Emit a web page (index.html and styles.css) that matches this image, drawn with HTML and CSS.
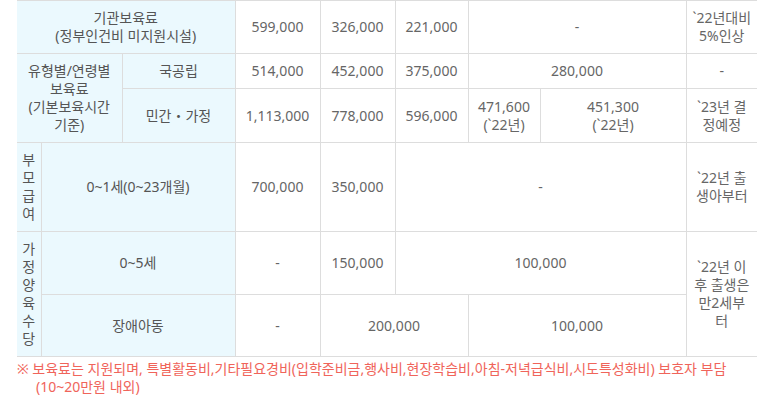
FILE: index.html
```html
<!DOCTYPE html>
<html lang="ko">

<head>
    <meta charset="UTF-8">
    <meta name="viewport" content="width=device-width, initial-scale=1.0">
    <title>보육료 지원단가</title>
    <link rel="stylesheet" href="styles.css">
</head>

<body>
    <div class="wrap">
        <table class="tbl">
            <colgroup>
                <col class="c1">
                <col class="c2">
                <col class="c3">
                <col class="c4">
                <col class="c5">
                <col class="c6">
                <col class="c7">
                <col class="c8">
                <col class="c9">
            </colgroup>
            <tbody>
                <tr class="r1">
                    <th colspan="3">기관보육료<br>(정부인건비 미지원시설)</th>
                    <td>599,000</td>
                    <td>326,000</td>
                    <td>221,000</td>
                    <td colspan="2">-</td>
                    <td class="note">`22년대비<br>5%인상</td>
                </tr>
                <tr class="r2">
                    <th colspan="2" rowspan="2">유형별/연령별<br>보육료<br>(기본보육시간<br>기준)</th>
                    <th>국공립</th>
                    <td>514,000</td>
                    <td>452,000</td>
                    <td>375,000</td>
                    <td colspan="2">280,000</td>
                    <td class="note">-</td>
                </tr>
                <tr class="r3">
                    <th>민간・가정</th>
                    <td>1,113,000</td>
                    <td>778,000</td>
                    <td>596,000</td>
                    <td>471,600<br>(`22년)</td>
                    <td>451,300<br>(`22년)</td>
                    <td class="note">`23년 결<br>정예정</td>
                </tr>
                <tr class="r4">
                    <th class="vert">부모급여</th>
                    <th colspan="2">0~1세(0~23개월)</th>
                    <td>700,000</td>
                    <td>350,000</td>
                    <td colspan="3">-</td>
                    <td class="note">`22년 출<br>생아부터</td>
                </tr>
                <tr class="r5">
                    <th rowspan="2" class="vert">가정양육수당</th>
                    <th colspan="2">0~5세</th>
                    <td>-</td>
                    <td>150,000</td>
                    <td colspan="3">100,000</td>
                    <td rowspan="2" class="note">`22년 이<br>후 출생은<br>만2세부<br>터</td>
                </tr>
                <tr class="r6">
                    <th colspan="2">장애아동</th>
                    <td>-</td>
                    <td colspan="2">200,000</td>
                    <td colspan="2">100,000</td>
                </tr>
            </tbody>
        </table>
        <p class="notice">※ 보육료는 지원되며, 특별활동비,기타필요경비(입학준비금,행사비,현장학습비,아침-저녁급식비,시도특성화비) 보호자 부담 (10~20만원 내외)</p>
    </div>
</body>

</html>
```

FILE: styles.css
```css
body {
    margin: 0;
    background: #fff;
    font-family: "Noto Sans", "Noto Sans CJK KR", "Malgun Gothic", sans-serif;
    font-size: 14px;
    line-height: 18px;
    color: #666;
}

.wrap {
    width: 740px;
    padding-left: 17px;
}

.tbl {
    width: 740px;
    table-layout: fixed;
    border-collapse: collapse;
    border-top: 1px solid #ddd;
}

.c1 { width: 24px; }
.c2 { width: 81px; }
.c3 { width: 113px; }
.c4 { width: 85px; }
.c5 { width: 75px; }
.c6 { width: 73px; }
.c7 { width: 72px; }
.c8 { width: 146px; }
.c9 { width: 71px; }

.tbl th,
.tbl td {
    padding: 8px 4px;
    border: 1px solid #ddd;
    text-align: center;
    vertical-align: middle;
    font-weight: normal;
}

.tbl tr > :first-child {
    border-left: none;
}

.tbl tr > :last-child {
    border-right: none;
}

.tbl th {
    background: #ebf9fe;
    color: #555;
}

.tbl .vert {
    padding: 8px 0;
}

.tbl .r6 > :last-child {
    border-right: 1px solid #ddd;
}

.r2 { height: 35px; }
.r3 { height: 53px; }
.r5 { height: 63px; }
.r6 { height: 62px; }

.notice {
    margin: 3px 0 0;
    padding-left: 19px;
    text-indent: -19px;
    color: #f0645a;
}
```
